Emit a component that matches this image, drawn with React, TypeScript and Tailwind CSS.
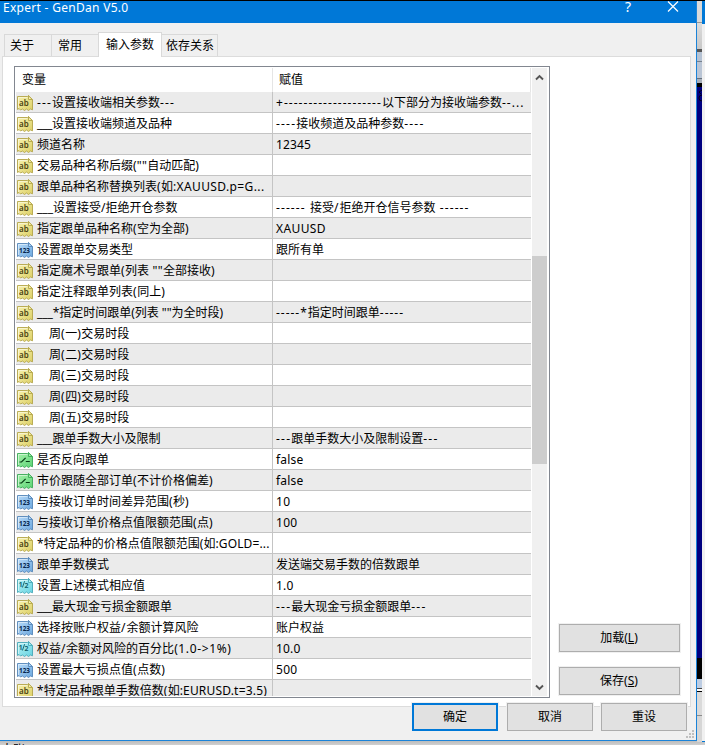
import { useLayoutEffect, useRef, useState } from "react";

type Kind = "ab" | "int" | "bool" | "dbl";
type Row = { kind: Kind; name: string; nameEnd?: number; value?: string; valueEnd?: number; indent?: boolean };

const rows: Row[] = [
  { kind: "ab", name: "---设置接收端相关参数---", nameEnd: 175, value: "+--------------------以下部分为接收端参数--...", valueEnd: 524.5 },
  { kind: "ab", name: "___设置接收端频道及品种", nameEnd: 172, value: "----接收频道及品种参数----", valueEnd: 424.5 },
  { kind: "ab", name: "频道名称", value: "12345", valueEnd: 311 },
  { kind: "ab", name: '交易品种名称后缀(""自动匹配)', nameEnd: 199 },
  { kind: "ab", name: "跟单品种名称替换列表(如:XAUUSD.p=G...", nameEnd: 264.5 },
  { kind: "ab", name: "___设置接受/拒绝开仓参数", nameEnd: 177.5, value: "------ 接受/拒绝开仓信号参数 ------", valueEnd: 469.5 },
  { kind: "ab", name: "指定跟单品种名称(空为全部)", nameEnd: 189, value: "XAUUSD", valueEnd: 326 },
  { kind: "int", name: "设置跟单交易类型", value: "跟所有单" },
  { kind: "ab", name: '指定魔术号跟单(列表 ""全部接收)', nameEnd: 215 },
  { kind: "ab", name: "指定注释跟单列表(同上)", nameEnd: 165.5 },
  { kind: "ab", name: '___*指定时间跟单(列表 ""为全时段)', nameEnd: 223, value: "-----*指定时间跟单-----", valueEnd: 404 },
  { kind: "ab", name: "周(一)交易时段", nameEnd: 117.3, indent: true },
  { kind: "ab", name: "周(二)交易时段", nameEnd: 117.3, indent: true },
  { kind: "ab", name: "周(三)交易时段", nameEnd: 117.3, indent: true },
  { kind: "ab", name: "周(四)交易时段", nameEnd: 117.3, indent: true },
  { kind: "ab", name: "周(五)交易时段", nameEnd: 117.3, indent: true },
  { kind: "ab", name: "___跟单手数大小及限制", nameEnd: 160.5, value: "---跟单手数大小及限制设置---", valueEnd: 438.5 },
  { kind: "bool", name: "是否反向跟单", value: "false", valueEnd: 303.5 },
  { kind: "bool", name: "市价跟随全部订单(不计价格偏差)", nameEnd: 213, value: "false", valueEnd: 303.5 },
  { kind: "int", name: "与接收订单时间差异范围(秒)", nameEnd: 189, value: "10", valueEnd: 290.5 },
  { kind: "int", name: "与接收订单价格点值限额范围(点)", nameEnd: 213, value: "100", valueEnd: 297.5 },
  { kind: "ab", name: "*特定品种的价格点值限额范围(如:GOLD=...", nameEnd: 269.5 },
  { kind: "int", name: "跟单手数模式", value: "发送端交易手数的倍数跟单" },
  { kind: "dbl", name: "设置上述模式相应值", value: "1.0", valueEnd: 293.5 },
  { kind: "ab", name: "___最大现金亏损金额跟单", nameEnd: 172, value: "---最大现金亏损金额跟单---", valueEnd: 426.5 },
  { kind: "int", name: "选择按账户权益/余额计算风险", nameEnd: 198.5, value: "账户权益" },
  { kind: "dbl", name: "权益/余额对风险的百分比(1.0->1%)", nameEnd: 231.5, value: "10.0", valueEnd: 300.5 },
  { kind: "int", name: "设置最大亏损点值(点数)", nameEnd: 165.5, value: "500", valueEnd: 297.5 },
  { kind: "ab", name: "*特定品种跟单手数倍数(如:EURUSD.t=3.5)", nameEnd: 267 },
];

/* A label whose non-CJK runs are spaced so the whole text takes the given width. */
function Label({ text, width }: { text: string; width?: number }) {
  const ref = useRef<HTMLSpanElement>(null);
  const [gap, setGap] = useState(0);
  const runs = text.match(/[\x20-\x7e]+|[^\x20-\x7e]+/g) ?? [];
  useLayoutEffect(() => {
    const count = (text.match(/[\x20-\x7e]/g) ?? []).length;
    if (ref.current && width && count) {
      setGap((g) => g + (width - ref.current!.getBoundingClientRect().width) / count);
    }
  }, [text, width]);
  return (
    <span ref={ref} className="inline-block whitespace-pre">
      {runs.map((run, i) => (
        <span key={i} style={/^[\x20-\x7e]/.test(run) ? { letterSpacing: gap } : undefined}>{run}</span>
      ))}
    </span>
  );
}

const palette: Record<Kind, { light: string; dark: string; edge: string; ink: string }> = {
  ab: { light: "#f8f3b0", dark: "#dccf66", edge: "#b3a548", ink: "#4a4210" },
  int: { light: "#b9dcfa", dark: "#6ea8de", edge: "#5586b8", ink: "#06264d" },
  bool: { light: "#a8f2ac", dark: "#5bd475", edge: "#3aa856", ink: "#063f16" },
  dbl: { light: "#b4f2f4", dark: "#68d3e2", edge: "#46a8b8", ink: "#0b5868" },
};

function TypeIcon({ kind }: { kind: Kind }) {
  const c = palette[kind];
  return (
    <svg width="17" height="17" viewBox="0 0 17 17" className="mt-[3px] shrink-0">
      <defs>
        <linearGradient id={kind} x1="0" y1="0" x2="1" y2="1">
          <stop offset="0" stopColor={c.light} />
          <stop offset="1" stopColor={c.dark} />
        </linearGradient>
      </defs>
      <path d="M.5 1.5V14.5L2 13.5 3.5 15 5.5 14 7.5 15.5 9.5 14 11.5 15.5 13.5 14 15.5 14.8V4.5L11.5.5 10.5 1.5Z" fill={`url(#${kind})`} stroke={c.edge} strokeWidth=".9" />
      <path d="M11.5.8V4.5H15.3Z" fill={c.light} stroke={c.edge} strokeWidth=".9" />
      <path d="M1.5 13V2.5H10.5" fill="none" stroke="#fff" strokeOpacity=".5" />
      {kind === "ab" && <text x="2" y="11" fontSize="9" fontWeight="600" textLength="9.6" lengthAdjust="spacingAndGlyphs" fill={c.ink} fontFamily="Noto Sans, sans-serif">ab</text>}
      {kind === "int" && <text x="2" y="10.9" fontSize="7" fontWeight="700" textLength="11" lengthAdjust="spacingAndGlyphs" fill={c.ink} fontFamily="Noto Sans, sans-serif">123</text>}
      {kind === "dbl" && (
        <g fill={c.ink} fontFamily="Noto Sans, sans-serif" fontWeight="600">
          <text x="1.6" y="8.8" fontSize="7.5">1</text>
          <path d="M5.4 9.5 7.6 3.2" stroke={c.ink} strokeWidth=".9" />
          <text x="7.4" y="10" fontSize="7">2</text>
        </g>
      )}
      {kind === "bool" && <path d="M2.5 10H4.5L8.6 5.8M8.8 9.5H12.8" fill="none" stroke={c.ink} strokeWidth="1.2" />}
    </svg>
  );
}

const btn = "flex h-[28px] items-center justify-center bg-[#e1e1e1] border border-[#adadad] outline outline-1 outline-[#f0f0f0]";

function Backdrop() {
  return (
    <div className="flex h-[741px] w-2">
      <div className="flex w-[5px] flex-col">
        <div className="h-[21px] bg-[#dadada]" />
        <div className="h-px bg-[#999]" />
        <div className="h-[26px] bg-gradient-to-b from-[#dcdcdc] to-[#c8c8c8]" />
        <div className="h-[3px] bg-[#555]" />
        <div className="h-[9px] bg-[#b5c2d3]" />
        <div className="h-px bg-[#77818d]" />
        <div className="h-[16px] bg-[#bac5d5]" />
        <div className="h-px bg-[#66707c]" />
        <div className="h-[4px] bg-[#a6aeba]" />
        <div className="h-[4px] bg-black" />
        <div className="relative h-[571px] bg-[#000080]">
          <svg width="5" height="14" viewBox="0 0 5 14" className="absolute left-0 top-[2px]"><path d="M5 1 2 3 4 5M5 6A3 3 0 0 0 5 12" fill="none" stroke="#00001c" /></svg>
        </div>
        <div className="h-[21px] bg-black" />
        <div className="h-[9px] bg-[#bdcde3]" />
        <div className="h-px bg-[#444]" />
        <div className="h-[2px] bg-white" />
        <div className="h-px bg-black" />
        <div className="h-[23px] bg-[#dadada]" />
        <div className="h-px bg-[#8c8c8c]" />
        <div className="flex-1 bg-[#d6d6d6]" />
      </div>
      <div className="flex w-[3px] flex-col">
        <div className="h-[23px] bg-[#0078d7]" />
        <div className="flex-1 bg-[#f0f0f0]" />
        <div className="h-px bg-[#0078d7]" />
      </div>
    </div>
  );
}

export default function App() {
  return (
    <div className="h-[745px] w-[705px] overflow-hidden bg-[#c8c8c8] text-[12px] leading-[18px] text-black [font-family:'Noto_Sans','Noto_Sans_CJK_SC',sans-serif]">
      <div className="h-px bg-black" />
      <div className="flex h-[740px]">
        <div className="flex h-[740px] w-[697px] flex-col border-b border-r border-[#1b83d8] bg-[#f0f0f0]">
          <header className="flex h-[22px] shrink-0 items-start bg-[#0078d7] pl-[3px] text-white">
            <div className="-mt-[2px] flex-1"><Label text="Expert - GenDan V5.0" width={125.5} /></div>
            <span className="mr-[36px] text-[14px] leading-[12px]">?</span>
            <svg width="12" height="12" viewBox="0 0 12 12" className="mr-[17px]"><path d="M1 .5 11 10.5M11 .5 1 10.5" stroke="#fff" strokeWidth="1.2" /></svg>
          </header>

          <nav className="flex h-[33px] shrink-0 items-end pl-1 pt-[9px]">
            <div className="h-[22px] w-[47px] border-l border-t border-[#d9d9d9] pl-[5px] pt-[2px]">关于</div>
            <div className="h-[22px] w-[47px] border-l border-t border-[#d9d9d9] pl-[6px] pt-[2px]">常用</div>
            <div className="z-10 -mb-px h-[25px] w-[64px] border-x border-t border-[#d9d9d9] bg-white pl-[7px] pt-[3px]">输入参数</div>
            <div className="h-[22px] w-[56px] border-r border-t border-[#d9d9d9] pl-[4px] pt-[2px]">依存关系</div>
          </nav>

          <main className="ml-[2px] flex h-[651px] w-[689px] shrink-0 border border-[#dcdcdc] bg-white pl-[11px] pt-[9px]">
            <section className="flex h-[632px] w-[536px] border border-[#828790] bg-white pl-px">
              <div className="h-[629px] w-[515px] overflow-hidden">
                <div className="flex h-[25px] pt-px">
                  <div className="w-[257px] border-r border-[#e5e5e5] pl-[6px] pt-[3px]">变量</div>
                  <div className="flex-1 border-r border-[#e5e5e5] pl-[6px] pt-[3px]">赋值</div>
                </div>
                {rows.map((row, i) => (
                  <div key={i} className="flex h-[21px] border-b border-[#c4c4c4] odd:bg-white even:bg-[#ebebeb]">
                    <div className="flex w-[257px] border-r border-[#c4c4c4] pl-px">
                      <TypeIcon kind={row.kind} />
                      <div className={row.indent ? "pl-[15px] pt-[2px]" : "pl-[3px] pt-[2px]"}>
                        <Label text={row.name} width={row.nameEnd ? row.nameEnd - 37 : undefined} />
                      </div>
                    </div>
                    <div className="pl-[3px] pt-[2px]">
                      {row.value && <Label text={row.value} width={row.valueEnd ? row.valueEnd - 276 : undefined} />}
                    </div>
                  </div>
                ))}
              </div>
              <div className="ml-px mt-px flex h-[628px] w-[15px] flex-col items-center bg-[#f0f0f0]">
                <svg width="9" height="7" viewBox="0 0 9 7" className="mt-[6px] shrink-0"><path d="M1 5.5 4.5 2 8 5.5" fill="none" stroke="#555" strokeWidth="1.9" /></svg>
                <div className="mt-[175px] h-[208px] w-[15px] shrink-0 bg-[#cdcdcd]" />
                <svg width="9" height="7" viewBox="0 0 9 7" className="mb-[5px] mt-auto shrink-0"><path d="M1 1.5 4.5 5 8 1.5" fill="none" stroke="#555" strokeWidth="1.9" /></svg>
              </div>
            </section>
            <aside className="ml-[9px] flex w-[121px] flex-col gap-[15px] pt-[558px]">
              <button className={btn}><span className="-ml-px">加载(<u>L</u>)</span></button>
              <button className={btn}><span className="-ml-px">保存(<u>S</u>)</span></button>
            </aside>
          </main>

          <footer className="z-10 -mt-[4px] ml-[412px] flex h-[28px]">
            <button className="flex h-[28px] w-[86px] items-center justify-center border-2 border-[#0078d7] bg-[#e1e1e1] outline outline-1 outline-[#f0f0f0]">确定</button>
            <button className={`${btn} ml-[9px] w-[86px]`}>取消</button>
            <button className={`${btn} ml-[8px] w-[86px]`}>重设</button>
          </footer>
          <svg width="8" height="8" viewBox="0 0 8 8" className="-mt-px ml-[686px]" fill="#bfbfbf"><path d="M6 0h2v2H6zM3 3h2v2H3zM6 3h2v2H6zM0 6h2v2H0zM3 6h2v2H3zM6 6h2v2H6z" /></svg>
        </div>
        <Backdrop />
      </div>
      <div className="flex h-1 overflow-hidden bg-gradient-to-b from-[#bcbcbc] to-[#d0d0d0] pl-[1px]">
        <span className="mt-0">大账</span>
      </div>
    </div>
  );
}
